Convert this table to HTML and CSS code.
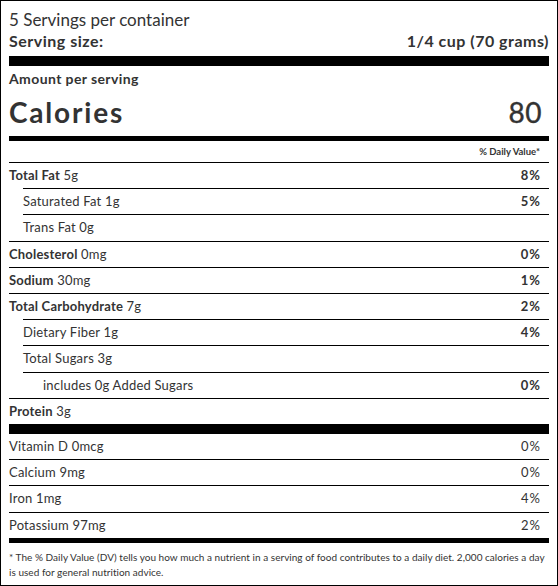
FILE: index.html
```html
<!DOCTYPE html>
<html lang="en">
<head>
  <meta charset="utf-8">
  <title>Nutrition Facts</title>
  <link rel="stylesheet" href="styles.css">
</head>
<body>
  <div class="label">
    <div class="servings">5 Servings per container</div>
    <div class="size">
      <span>Serving size:</span>
      <span>1/4 cup (70 grams)</span>
    </div>
    <div class="bar bar-thick"></div>

    <div class="amount">Amount per serving</div>
    <div class="calories">
      <span>Calories</span>
      <span class="cal-value">80</span>
    </div>
    <div class="bar bar-mid"></div>

    <div class="dv-head">% Daily Value*</div>

    <div class="row">
      <span><b>Total Fat</b> 5g</span>
      <b class="pct">8%</b>
    </div>
    <div class="row sub">
      <span>Saturated Fat 1g</span>
      <b class="pct">5%</b>
    </div>
    <div class="row sub">
      <span>Trans Fat 0g</span>
    </div>
    <div class="row">
      <span><b>Cholesterol</b> 0mg</span>
      <b class="pct">0%</b>
    </div>
    <div class="row">
      <span><b>Sodium</b> 30mg</span>
      <b class="pct">1%</b>
    </div>
    <div class="row">
      <span><b>Total Carbohydrate</b> 7g</span>
      <b class="pct">2%</b>
    </div>
    <div class="row sub">
      <span>Dietary Fiber 1g</span>
      <b class="pct">4%</b>
    </div>
    <div class="row sub">
      <span>Total Sugars 3g</span>
    </div>
    <div class="row sub subsub">
      <span>includes 0g Added Sugars</span>
      <b class="pct">0%</b>
    </div>
    <div class="row">
      <span><b>Protein</b> 3g</span>
    </div>
    <div class="bar bar-thick"></div>

    <div class="row first">
      <span>Vitamin D 0mcg</span>
      <span class="pct">0%</span>
    </div>
    <div class="row">
      <span>Calcium 9mg</span>
      <span class="pct">0%</span>
    </div>
    <div class="row">
      <span>Iron 1mg</span>
      <span class="pct">4%</span>
    </div>
    <div class="row">
      <span>Potassium 97mg</span>
      <span class="pct">2%</span>
    </div>
    <div class="bar bar-mid"></div>

    <p class="note">* The % Daily Value (DV) tells you how much a nutrient in a serving of food contributes to a daily diet. 2,000 calories a day is used for general nutrition advice.</p>
  </div>
</body>
</html>
```

FILE: styles.css
```css
html, body {
  margin: 0;
  padding: 0;
}
body {
  font-family: Lato, "Open Sans", sans-serif;
  color: #333;
  background: #fff;
}
.label {
  width: 558px;
  height: 586px;
  box-sizing: border-box;
  border: 1px solid #000;
  padding: 7px 8px 0 8px;
}
.servings {
  font-size: 17px;
  line-height: 23px;
}
.size {
  display: flex;
  justify-content: space-between;
  font-size: 16px;
  font-weight: bold;
  letter-spacing: 0.5px;
  line-height: 20px;
}
.bar {
  background: #000;
}
.bar-thick {
  height: 10px;
}
.size + .bar-thick {
  margin-top: 5px;
}
.bar-mid {
  height: 5px;
}
.amount {
  font-size: 14px;
  font-weight: bold;
  letter-spacing: 0.4px;
  line-height: 22px;
  padding-top: 2px;
}
.calories {
  display: flex;
  justify-content: space-between;
  font-size: 28px;
  font-weight: bold;
  letter-spacing: 1.8px;
  line-height: 34px;
  margin-top: 5px;
}
.cal-value {
  font-weight: normal;
  letter-spacing: 0.5px;
  padding-right: 7px;
  -webkit-text-stroke: 0.4px #333;
}
.calories + .bar-mid {
  margin-top: 7px;
}
.dv-head {
  font-size: 9.5px;
  font-weight: bold;
  line-height: 21px;
  text-align: right;
  padding-right: 9px;
}
.row {
  display: flex;
  justify-content: space-between;
  border-top: 1px solid #000;
  font-size: 13px;
  letter-spacing: 0.2px;
  line-height: 25.2px;
}
.row.first {
  border-top: none;
}
.sub {
  margin-left: 14px;
}
.subsub span {
  padding-left: 20px;
}
.pct {
  padding-right: 8px;
  letter-spacing: 1px;
}
.note {
  margin: 0;
  padding-top: 7px;
  font-size: 10px;
  letter-spacing: 0.03px;
  line-height: 15px;
}
```
